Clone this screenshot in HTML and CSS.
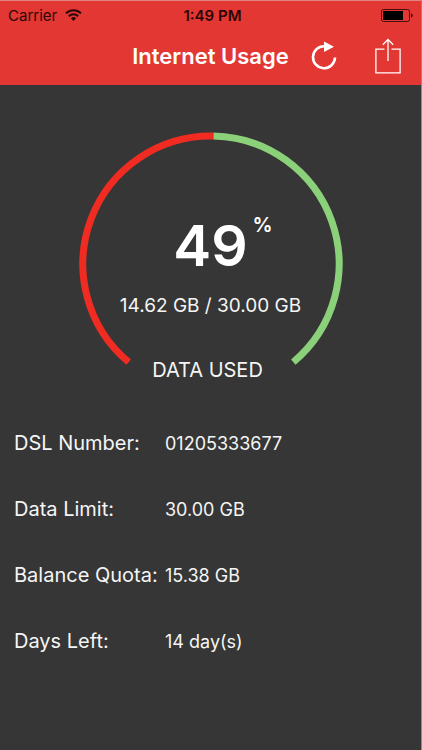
FILE: index.html
```html
<!DOCTYPE html>
<html lang="en">
<head>
    <meta charset="UTF-8">
    <meta name="viewport" content="width=device-width, initial-scale=1.0">
    <title>Internet Usage</title>
    <link rel="stylesheet" href="styles.css">
</head>
<body>
<div class="app">
    <header class="header">
        <div class="status-bar">
            <div class="carrier">
                <span>Carrier</span>
                <svg width="17" height="12" viewBox="0 0 17 12" fill="none" stroke="currentColor" stroke-width="2">
                    <path d="M1 4.4a10.6 10.6 0 0 1 15 0"/>
                    <path d="M3.8 7.2a6.7 6.7 0 0 1 9.4 0"/>
                    <path d="M8.5 12L5.9 9.3a3.8 3.8 0 0 1 5.2 0z" fill="currentColor" stroke="none"/>
                </svg>
            </div>
            <div class="time">1:49 PM</div>
            <div class="battery">
                <svg width="32" height="13" viewBox="0 0 32 13">
                    <rect x="0.5" y="0.5" width="28" height="12" rx="2" fill="none" stroke="currentColor" stroke-opacity="0.7"/>
                    <rect x="2" y="2" width="20" height="9" fill="currentColor"/>
                    <path d="M30 4.5c2 .6 2 3.4 0 4z" fill="currentColor"/>
                </svg>
            </div>
        </div>
        <div class="nav-bar">
            <h1>Internet Usage</h1>
            <div class="actions">
                <button type="button" aria-label="Refresh">
                    <svg width="26" height="30" viewBox="0 0 26 30">
                        <path d="M13.5 5.2A11 11 0 1 0 24 16.5" fill="none" stroke="#fff" stroke-width="2.6"/>
                        <path d="M13 0.5v10.5L23 5.8z" fill="#fff"/>
                    </svg>
                </button>
                <button type="button" aria-label="Share">
                    <svg width="26" height="36" viewBox="0 0 26 36" fill="none" stroke="#fff" stroke-width="1.3">
                        <path d="M9.5 11.2H.9v23.6h24.2V11.2h-8.6"/>
                        <path d="M13 23V1.5M7.8 6.7L13 1.5l5.2 5.2"/>
                    </svg>
                </button>
            </div>
        </div>
    </header>

    <main>
        <section class="gauge">
            <svg class="gauge-ring" viewBox="0 0 264 264" fill="none" stroke-width="7">
                <path d="M49.7 230.1A128 128 0 0 1 134.5 4" stroke="#f02c22"/>
                <path d="M134.5 4A128 128 0 0 1 214.3 230.1" stroke="#8bd179"/>
            </svg>
            <div class="gauge-text">
                <div class="percent">49<sup>%</sup></div>
                <div class="amount">14.62 GB / 30.00 GB</div>
                <div class="caption">DATA USED</div>
            </div>
        </section>

        <dl class="details">
            <dt>DSL Number:</dt>
            <dd>01205333677</dd>
            <dt>Data Limit:</dt>
            <dd>30.00 GB</dd>
            <dt>Balance Quota:</dt>
            <dd>15.38 GB</dd>
            <dt>Days Left:</dt>
            <dd>14 day(s)</dd>
        </dl>
    </main>
</div>
</body>
</html>
```

FILE: styles.css
```css
* {
    box-sizing: border-box;
}

body {
    margin: 0;
    font-family: Inter, "Liberation Sans", sans-serif;
    background-color: #363636;
    color: #f5f5f5;
}

.app {
    min-height: 100vh;
    border-right: 1px solid #8c8c8c;
}

.header {
    height: 85px;
    background-color: #e23733;
    border-top: 1px solid #e08482;
}

.status-bar {
    display: grid;
    grid-template-columns: 1fr auto 1fr;
    align-items: center;
    height: 28px;
    padding: 0 8px;
    font-size: 15px;
    color: #2a0606;
}

.carrier {
    display: flex;
    align-items: center;
    gap: 8px;
}

.time {
    margin-left: 4px;
    font-weight: 600;
}

.battery {
    display: flex;
    justify-content: flex-end;
    color: #000;
}

.nav-bar {
    display: grid;
    grid-template-columns: 1fr auto 1fr;
    align-items: center;
    height: 54px;
    padding: 0 20px;
}

h1 {
    grid-column: 2;
    margin: 0;
    font-size: 22px;
    font-weight: 600;
    color: #fff;
}

.actions {
    display: flex;
    align-items: center;
    justify-content: space-between;
    padding-left: 22px;
}

button {
    display: flex;
    padding: 0;
    border: none;
    background: none;
    cursor: pointer;
}

.gauge {
    position: relative;
    width: 264px;
    margin: 47px auto 0;
}

.gauge-ring {
    display: block;
    width: 100%;
}

.gauge-text {
    position: absolute;
    top: 80px;
    left: 0;
    width: 100%;
    text-align: center;
}

.percent {
    position: relative;
    line-height: 68px;
    font-size: 57px;
    font-weight: 600;
    color: #fff;
}

.percent sup {
    position: absolute;
    top: 0;
    left: 174px;
    line-height: 26px;
    font-size: 20px;
    font-weight: 600;
}

.amount {
    margin-top: 13px;
    line-height: 26px;
    font-size: 19px;
}

.caption {
    margin-top: 39px;
    padding-right: 6px;
    line-height: 24px;
    font-size: 20px;
}

.details {
    display: grid;
    grid-template-columns: 144px 1fr;
    grid-auto-rows: 66px;
    align-items: center;
    column-gap: 7px;
    margin: 14px 0 0;
    padding: 0 14px;
    white-space: nowrap;
}

dt {
    font-size: 20px;
}

dd {
    margin: 0;
    font-size: 18px;
}
```
